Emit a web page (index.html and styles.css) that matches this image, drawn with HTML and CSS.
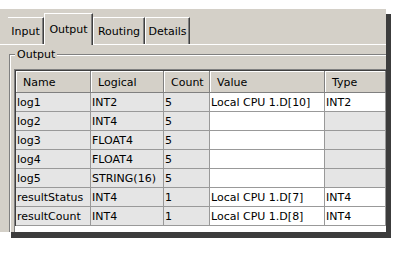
FILE: index.html
```html
<!DOCTYPE html>
<html lang="en">
<head>
    <meta charset="UTF-8">
    <title>Output</title>
    <link rel="stylesheet" href="styles.css">
</head>
<body>
    <div class="frame">
        <div class="window">
            <div class="tabs">
                <div class="tab tab-input">Input</div>
                <div class="tab tab-output active">Output</div>
                <div class="tab tab-routing">Routing</div>
                <div class="tab tab-details">Details</div>
            </div>
            <div class="page">
                <fieldset class="group">
                    <legend>Output</legend>
                    <div class="grid">
                        <table>
                            <colgroup>
                                <col class="c-name">
                                <col class="c-logical">
                                <col class="c-count">
                                <col class="c-value">
                                <col class="c-type">
                            </colgroup>
                            <thead>
                                <tr><th>Name</th><th>Logical</th><th>Count</th><th>Value</th><th>Type</th></tr>
                            </thead>
                            <tbody>
                                <tr><td class="ro">log1</td><td class="ro">INT2</td><td class="ro">5</td><td>Local CPU 1.D[10]</td><td>INT2</td></tr>
                                <tr><td class="ro">log2</td><td class="ro">INT4</td><td class="ro">5</td><td></td><td class="ro"></td></tr>
                                <tr><td class="ro">log3</td><td class="ro">FLOAT4</td><td class="ro">5</td><td></td><td class="ro"></td></tr>
                                <tr><td class="ro">log4</td><td class="ro">FLOAT4</td><td class="ro">5</td><td></td><td class="ro"></td></tr>
                                <tr><td class="ro">log5</td><td class="ro">STRING(16)</td><td class="ro">5</td><td></td><td class="ro"></td></tr>
                                <tr><td class="ro">resultStatus</td><td class="ro">INT4</td><td class="ro">1</td><td>Local CPU 1.D[7]</td><td>INT4</td></tr>
                                <tr><td class="ro">resultCount</td><td class="ro">INT4</td><td class="ro">1</td><td>Local CPU 1.D[8]</td><td>INT4</td></tr>
                            </tbody>
                        </table>
                    </div>
                </fieldset>
            </div>
        </div>
    </div>
</body>
</html>
```

FILE: styles.css
```css
body {
    margin: 0;
    padding-top: 9px;
    background: #fff;
    font-family: "DejaVu Sans", sans-serif;
    font-size: 11px;
    color: #000;
}
/* the frame paints the drop shadow under the window */
.frame {
    width: 391px;
    height: 229px;
    background: linear-gradient(#3c3c3c, #3c3c3c) 11px 5px / 380px 224px no-repeat;
}
.window {
    display: flex;
    flex-direction: column;
    width: 386px;
    height: 223px;
    overflow: hidden;
    background: #d4d0c8;
}
.tabs {
    display: flex;
    align-items: flex-end;
    flex: none;
    height: 35px;
    padding-left: 8px;
}
.tab {
    box-sizing: border-box;
    display: flex;
    align-items: center;
    justify-content: center;
    height: 27px;
    background: #d4d0c8;
    border-top: 1px solid #fff;
    border-left: 1px solid #fff;
    border-right: 1px solid #404040;
    box-shadow: inset -1px 0 #808080;
    white-space: nowrap;
}
.tab.active {
    position: relative;
    height: 32px;
    margin-bottom: -1px;
}
.tab-input {
    width: 36px;
    border-left: none;
}
.tab-output {
    width: 49px;
}
.tab-routing {
    width: 52px;
}
.tab-details {
    width: 45px;
}
.page {
    flex: 1;
    min-height: 0;
    border-top: 1px solid #fff;
}
.group {
    width: 460px;
    min-width: 0;
    margin: 3px 0 0 9px;
    padding: 8px 0 0 4px;
    border: 1px solid #808080;
    box-shadow: inset 1px 1px #fff;
}
.group legend {
    margin-left: 1px;
    padding: 0 2px;
    line-height: 13px;
    background: #d4d0c8;
}
.grid {
    width: 420px;
    height: 170px;
    border-top: 1px solid #808080;
    border-left: 1px solid #808080;
    background: #fff;
}
table {
    table-layout: fixed;
    width: 371px;
    border-collapse: separate;
    border-spacing: 0;
    border-top: 1px solid #404040;
    border-left: 1px solid #404040;
}
.c-name { width: 75px; }
.c-logical { width: 73px; }
.c-count { width: 46px; }
.c-value { width: 115px; }
.c-type { width: 61px; }
th {
    height: 19px;
    padding: 2px 0 0 7px;
    text-align: left;
    font-weight: normal;
    background: #d4d0c8;
    border-right: 1px solid #808080;
    border-bottom: 1px solid #808080;
    box-shadow: inset 1px 1px #fff;
    white-space: nowrap;
    overflow: hidden;
}
td {
    height: 18px;
    padding: 0 1px;
    border-right: 1px solid #999;
    border-bottom: 1px solid #999;
    background: #fff;
    white-space: nowrap;
    overflow: hidden;
}
td.ro {
    background: #e5e5e5;
}
```
